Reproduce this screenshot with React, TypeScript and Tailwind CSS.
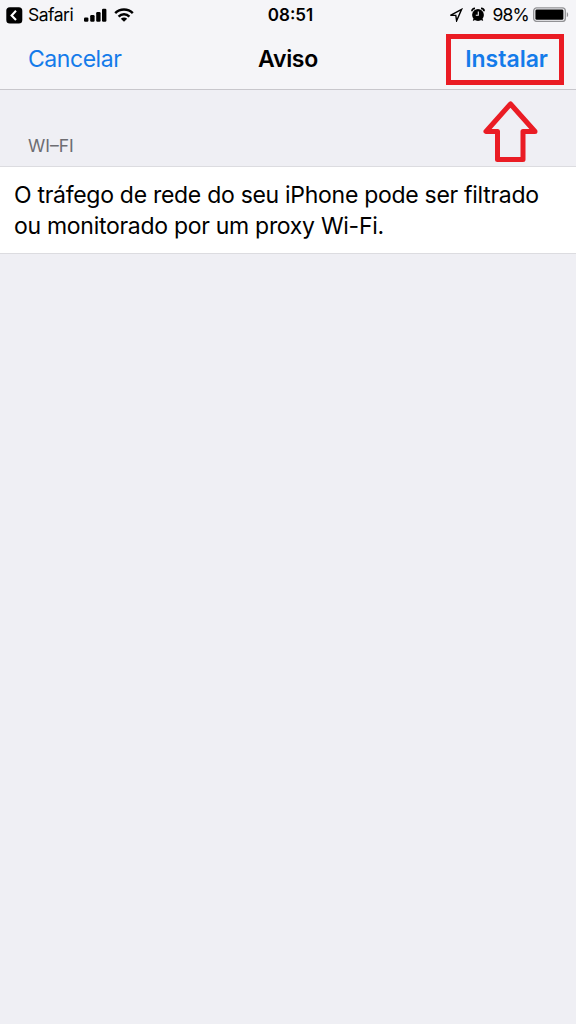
import React from 'react';

function SignalIcon() {
    return (
        <svg width="24" height="14" viewBox="0 0 24 14" fill="black">
            <rect x="0" y="9.4" width="4.4" height="4.4" rx="1.2" />
            <rect x="6.2" y="7" width="4.4" height="6.8" rx="1.2" />
            <rect x="12.2" y="4" width="4.4" height="9.8" rx="1.2" />
            <rect x="18" y="0.8" width="4.4" height="13" rx="1.2" />
        </svg>
    );
}

function WifiIcon() {
    return (
        <svg width="20" height="14" viewBox="0 0 20 14" fill="none" stroke="black" strokeWidth="2.5">
            <path d="M1.2 5.2C6 0.4 14 0.4 18.8 5.2" />
            <path d="M4.6 8.6C7.6 5.6 12.4 5.6 15.4 8.6" />
            <path d="M10 13.8L6.8 10.7C8.6 9.1 11.4 9.1 13.2 10.7Z" fill="black" stroke="none" />
        </svg>
    );
}

function LocationIcon() {
    return (
        <svg width="14" height="14" viewBox="0 0 14 14" fill="none" stroke="black" strokeWidth="1.4">
            <path d="M12.6 1.4L1.4 7.4H6.8L7.6 12.8Z" />
        </svg>
    );
}

function AlarmIcon() {
    return (
        <svg width="14" height="15" viewBox="0 0 14 15" fill="none">
            <circle cx="7" cy="8" r="5.9" fill="black" />
            <path d="M0.9 4.2C0.9 2.4 2.2 1.4 4 1.4M10 1.4C11.8 1.4 13.1 2.4 13.1 4.2" stroke="black" strokeWidth="1.7" />
            <path d="M3.2 12L2.4 13.6M10.8 12L11.6 13.6" stroke="black" strokeWidth="1.4" />
            <path d="M7.3 4.6V8.2H4.8" stroke="#f5f5f8" strokeWidth="1.1" />
        </svg>
    );
}

function BatteryIcon() {
    return (
        <svg width="37" height="15" viewBox="0 0 37 15">
            <rect x="0.7" y="0.8" width="31.6" height="13.6" rx="3" fill="none" stroke="#929295" strokeWidth="1.3" />
            <rect x="2.4" y="2.4" width="28" height="10.4" rx="1.4" fill="black" />
            <path d="M33.8 5.2C35.6 5.8 35.6 9.4 33.8 10Z" fill="#929295" />
        </svg>
    );
}

function StatusBar() {
    return (
        <div className="grid h-[30px] grid-cols-3 items-center text-[17.5px] text-black">
            <div className="flex items-center pl-[6px]">
                <svg width="17" height="17" viewBox="0 0 17 17">
                    <rect x="0.3" y="0.2" width="16" height="16.4" rx="3.5" fill="black" />
                    <path d="M10 3.8L5.6 8.4L10 13" fill="none" stroke="white" strokeWidth="2.1" />
                </svg>
                <span className="ml-[5px] w-[56px] tracking-[-0.5px] whitespace-nowrap">Safari</span>
                <span className="mb-[1px]"><SignalIcon /></span>
                <span className="mb-[1px] ml-[6px]"><WifiIcon /></span>
            </div>
            <div className="pt-[2px] pl-[5px] text-center text-[17px] font-semibold">08:51</div>
            <div className="flex items-center justify-end pr-[6px]">
                <span className="mb-[1px]"><LocationIcon /></span>
                <span className="mb-[2px] ml-[8px]"><AlarmIcon /></span>
                <span className="mr-[4px] ml-[8px] whitespace-nowrap tracking-[-0.8px]">98%</span>
                <span className="mb-[2px]"><BatteryIcon /></span>
            </div>
        </div>
    );
}

export default function App() {
    return (
        <div className="min-h-[1024px] w-[576px] bg-[#efeff4] font-['Inter','Liberation_Sans',sans-serif]">
            <header className="h-[90px] border-b border-[#c8c7cc] bg-[#f5f5f8]">
                <StatusBar />
                <nav className="relative grid h-[58px] grid-cols-3 items-center text-[23px] leading-[28px]">
                    <button className="pl-[28px] text-left tracking-[-0.45px] text-[#147bea]">Cancelar</button>
                    <h1 className="text-center font-semibold tracking-[-0.3px] text-black">Aviso</h1>
                    <button className="pr-[28px] text-right font-semibold text-[#147bea]">Instalar</button>

                    {/* Destaque do botão */}
                    <div className="absolute top-[4px] left-[446px] h-[51px] w-[118px] border-5 border-[#ea1c24]" />
                    <svg className="absolute top-[70px] left-[482px]" width="57" height="64" viewBox="0 0 57 64">
                        <path
                            d="M28.5 4L4 31.5H15.5V59.5H41V31.5H53Z"
                            fill="none"
                            stroke="#ea1c24"
                            strokeWidth="5"
                            strokeLinejoin="round"
                        />
                    </svg>
                </nav>
            </header>

            <section>
                <h2 className="h-[76px] pt-[44px] pl-[28px] text-[17.5px] leading-[24px] text-[#6d6d72]">WI–FI</h2>
                <p className="h-[88px] border-y border-[#dcdce0] bg-white pt-[13px] pl-[14px] text-[23px] leading-[31px] tracking-[-0.29px] whitespace-nowrap text-black">
                    O tráfego de rede do seu iPhone pode ser filtrado<br />
                    ou monitorado por um proxy Wi-Fi.
                </p>
            </section>
        </div>
    );
}
